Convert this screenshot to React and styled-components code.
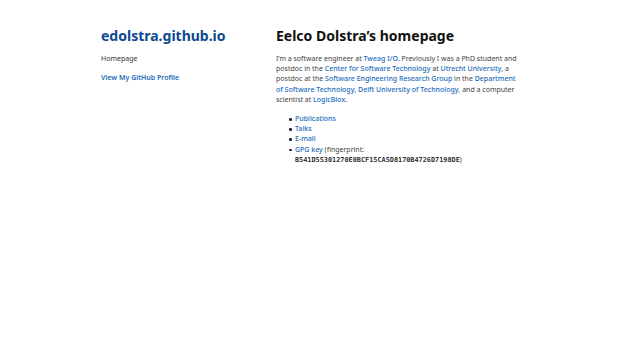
import React from "react";
import styled, { createGlobalStyle } from "styled-components";

const Global = createGlobalStyle`
  html, body { margin: 0; padding: 0; background: #fff; }
  body { font-family: "Noto Sans", "Open Sans", sans-serif; color: #4a4a4a; }
`;

const Wrapper = styled.div`
  display: flex;
  padding: 25px 0 0 101px;
`;

const Header = styled.header`
  width: 175px;
  flex-shrink: 0;
`;

const Section = styled.section`
  width: 243px;
`;

const SiteTitle = styled.h1`
  margin: 0;
  font-size: 14px;
  line-height: 21px;
  font-weight: 700;
  color: #0b4a8f;
`;

const Tagline = styled.p`
  margin: 8px 0 0;
  font-size: 7px;
  line-height: 10px;
  color: #333;
`;

const ProfileLink = styled.a`
  display: block;
  margin-top: 9px;
  font-size: 7px;
  line-height: 10px;
  font-weight: 600;
  color: #1a6cbd;
  text-decoration: none;
`;

const PageTitle = styled.h2`
  margin: 0;
  font-size: 14px;
  line-height: 21px;
  font-weight: 700;
  color: #111;
`;

const Para = styled.p`
  margin: 8px 0 0;
  font-size: 7px;
  line-height: 10.2px;
  color: #444;
`;

const A = styled.a`
  color: #1a6cbd;
  text-decoration: none;
  font-weight: 500;
`;

const List = styled.ul`
  margin: 9px 0 0;
  padding: 0 0 0 19px;
  list-style: none;
  font-size: 7px;
  line-height: 10.2px;
  color: #444;
`;

const Item = styled.li`
  position: relative;
  &::before {
    content: "";
    position: absolute;
    left: -6px;
    top: 4px;
    width: 2.6px;
    height: 2.6px;
    border-radius: 50%;
    background: #222;
  }
`;

const Mono = styled.code`
  font-family: "DejaVu Sans Mono", monospace;
  font-size: 6.85px;
  font-weight: 700;
  color: #333;
`;

export default function App() {
  return (
    <>
      <Global />
      <Wrapper>
        <Header>
          <SiteTitle>edolstra.github.io</SiteTitle>
          <Tagline>Homepage</Tagline>
          <ProfileLink href="#">View My GitHub Profile</ProfileLink>
        </Header>
        <Section>
          <PageTitle>Eelco Dolstra’s homepage</PageTitle>
          <Para>
            I’m a software engineer at <A href="#">Tweag I/O</A>. Previously I
            was a PhD student and postdoc in the{" "}
            <A href="#">Center for Software Technology</A> at{" "}
            <A href="#">Utrecht University</A>, a postdoc at the{" "}
            <A href="#">Software Engineering Research Group</A> in the{" "}
            <A href="#">Department of Software Technology</A>,{" "}
            <A href="#">Delft University of Technology</A>, and a computer
            scientist at <A href="#">LogicBlox</A>.
          </Para>
          <List>
            <Item><A href="#">Publications</A></Item>
            <Item><A href="#">Talks</A></Item>
            <Item><A href="#">E-mail</A></Item>
            <Item>
              <A href="#">GPG key</A> (fingerprint:{" "}
              <Mono>B541D55301270E0BCF15CA5D8170B4726D7198DE</Mono>)
            </Item>
          </List>
        </Section>
      </Wrapper>
    </>
  );
}
